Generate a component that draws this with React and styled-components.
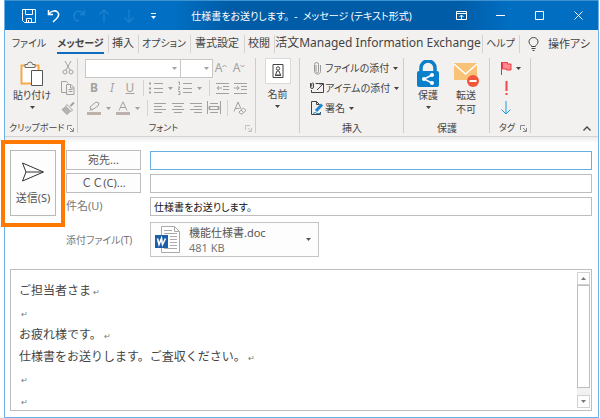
import { useState } from "react";
import styled, { createGlobalStyle, css } from "styled-components";

const TABS = [
  { name: "ファイル", width: 48, size: 10 },
  { name: "メッセージ", width: 55, size: 10, active: true },
  { name: "挿入", width: 30, size: 11, line: true },
  { name: "オプション", width: 52, size: 10, line: true },
  { name: "書式設定", width: 54, size: 11, line: true },
  { name: "校閲", width: 30, size: 11, line: true },
  {
    name: "活文Managed Information Exchange",
    width: 208,
    size: 12,
    line: true,
  },
  { name: "ヘルプ", width: 37, size: 10, line: true },
];

const BODY_LINES = [
  "ご担当者さま",
  "",
  "お疲れ様です。",
  "仕様書をお送りします。ご査収ください。",
  "",
  "",
];

const Icon = ({ w = 16, h = 16, children, ...rest }) => (
  <svg
    width={w}
    height={h}
    viewBox={`0 0 ${w} ${h}`}
    fill="none"
    stroke="currentColor"
    aria-hidden="true"
    {...rest}
  >
    {children}
  </svg>
);

const Caret = () => (
  <Icon w={5} h={3} stroke="none">
    <path d="M0 0h5L2.500 3z" fill="currentColor" />
  </Icon>
);

const Launcher = () => (
  <Icon w={7} h={7}>
    <path d="M.5 5V.5H5M3 3l3 3M6.500 3v3.500H3" />
  </Icon>
);

const Lines = ({ rows }) => (
  <Icon w={14} h={14}>
    {rows.map(([from, to], i) => (
      <path key={i} d={`M${from} ${2.5 + i * 3}H${to}`} />
    ))}
  </Icon>
);

const App = () => {
  const [subject, setSubject] = useState("仕様書をお送りします。");
  const [to, setTo] = useState("");
  const [cc, setCc] = useState("");

  return (
    <>
      <GlobalStyle />
      <Window>
        <TitleBar>
          <QuickAccess>
            <TitleButton aria-label="上書き保存">
              <Icon w={14} h={14}>
                <path d="M.5.5h13v13h-11l-2-2zM3.500.5v5h7v-5M4.500 13.500v-4h5v4M6.500 11v2" />
              </Icon>
            </TitleButton>
            <TitleButton aria-label="元に戻す">
              <Icon w={14} h={14} strokeWidth="1.500">
                <path d="M1.500 1v4.500H6M1.500 5.500C4 2 8 .8 10.500 3c3 3 0 6-4.500 10" />
              </Icon>
            </TitleButton>
            <TitleButton aria-label="やり直し" disabled>
              <Icon w={14} h={14} strokeWidth="1.500">
                <path d="M12.500 1v4.500H8M12 5C9 1.500 5 1.500 3 4c-2.500 3.500 0 8 4 8" />
              </Icon>
            </TitleButton>
            <TitleButton aria-label="前のアイテム" disabled>
              <Icon w={14} h={14} strokeWidth="1.300">
                <path d="M7 13.500V1M2.500 5.500L7 1l4.500 4.500" />
              </Icon>
            </TitleButton>
            <TitleButton aria-label="次のアイテム" disabled>
              <Icon w={14} h={14} strokeWidth="1.300">
                <path d="M7 .5V13M2.500 8.500L7 13l4.500-4.500" />
              </Icon>
            </TitleButton>
            <TitleButton aria-label="カスタマイズ">
              <Icon w={5} h={6}>
                <path d="M0 .5h5" />
                <path d="M0 3h5L2.500 6z" fill="currentColor" stroke="none" />
              </Icon>
            </TitleButton>
          </QuickAccess>
          <Title>仕様書をお送りします。&nbsp; -&nbsp; メッセージ (テキスト形式)</Title>
          <WindowControls>
            <TitleButton $wide aria-label="リボンの表示オプション">
              <Icon w={11} h={10}>
                <path d="M.5.5h10v8H.5zM.5 2.500h10M5.500 8V4M3.500 6l2-2 2 2" />
              </Icon>
            </TitleButton>
            <TitleButton $wide aria-label="最小化">
              <Icon w={9} h={9}>
                <path d="M0 4.500h9" />
              </Icon>
            </TitleButton>
            <TitleButton $wide aria-label="最大化">
              <Icon w={9} h={9}>
                <path d="M.5.5h8v8h-8z" />
              </Icon>
            </TitleButton>
            <TitleButton $wide aria-label="閉じる">
              <Icon w={9} h={9}>
                <path d="M.5.5l8 8M8.500.5l-8 8" />
              </Icon>
            </TitleButton>
          </WindowControls>
        </TitleBar>

        <Tabs>
          {TABS.map((tab) => (
            <Tab
              key={tab.name}
              $width={tab.width}
              $size={tab.size}
              $active={tab.active}
              $line={tab.line}
            >
              <span>{tab.name}</span>
            </Tab>
          ))}
          <Assist>
            <Icon w={11} h={14}>
              <path d="M3.500 9.500C3.500 8 1 7.500 1 4.800a4.500 4.300 0 019 0C10 7.500 7.500 8 7.500 9.500zM3.500 11.500h4M4.500 13.500h2" />
            </Icon>
            操作アシ
          </Assist>
        </Tabs>

        <Ribbon>
          <Group $width={73}>
            <GroupBody>
              <BigButton $width={54}>
                <IconSlot>
                  <Icon w={24} h={28}>
                    <path d="M1.500 5.500h17v18h-17z" fill="#fff" stroke="#f5a94a" strokeWidth="2" />
                    <path d="M5 7.500v-3h2.500a2.500 2.500 0 015 0H15v3z" fill="#f3f1f0" stroke="#6b6b6b" />
                    <path d="M11.500 10.500h11v15h-11z" fill="#fff" stroke="#555" />
                  </Icon>
                </IconSlot>
                貼り付け
                <Caret />
              </BigButton>
              <Stack>
                <ToolButton aria-label="切り取り">
                  <Icon w={12} h={14}>
                    <path d="M3 0l5 9M9 0L4 9" />
                    <circle cx="3" cy="11" r="2" />
                    <circle cx="9" cy="11" r="2" />
                  </Icon>
                </ToolButton>
                <ToolButton aria-label="コピー">
                  <Icon w={14} h={14}>
                    <path d="M5 11.500H.5v-11h5l2 2M5.500 3.500h4.500l3 3v7H5.500zM9.500 3.500v3.500H13M7.500 8.500h4M7.500 10.500h4" />
                  </Icon>
                </ToolButton>
                <ToolButton aria-label="書式のコピー">
                  <Icon w={14} h={13}>
                    <path d="M13 .5L9.500 4" strokeWidth="2" />
                    <path d="M6 2.500l5.500 5.500-1.500 1.500L4.500 4z" fill="#f3f1f0" />
                    <path d="M4.500 5L1 7.500 6 12.500 9 9.500z" fill="#b6b4b3" />
                  </Icon>
                </ToolButton>
              </Stack>
            </GroupBody>
            <GroupLabel $kana>
              クリップボード
              <Launcher />
            </GroupLabel>
          </Group>

          <Group $width={178}>
            <FontBody>
              <ToolRow>
                <Picker $width={96}>
                  <select aria-label="フォント" />
                  <Caret />
                </Picker>
                <Picker $width={33}>
                  <select aria-label="フォント サイズ" />
                  <Caret />
                </Picker>
                <ToolButton aria-label="拡大">
                  A
                  <Icon w={5} h={8}>
                    <path d="M.5 3l2-2 2 2" />
                  </Icon>
                </ToolButton>
                <ToolButton aria-label="縮小">
                  A
                  <Icon w={5} h={8}>
                    <path d="M.5 1l2 2 2-2" />
                  </Icon>
                </ToolButton>
              </ToolRow>
              <ToolRow>
                <ToolButton aria-label="太字">
                  <b>B</b>
                </ToolButton>
                <ToolButton aria-label="斜体">
                  <i>I</i>
                </ToolButton>
                <ToolButton aria-label="下線">
                  <u>U</u>
                </ToolButton>
                <ToolLine />
                <ToolButton aria-label="箇条書き">
                  <Icon w={14} h={14}>
                    <path d="M5 2.500h9M5 7.500h9M5 11.500h9" />
                    <path d="M0 2.500h2M0 7.500h2M0 11.500h2" strokeWidth="2" />
                  </Icon>
                </ToolButton>
                <DropButton aria-label="箇条書きの種類">
                  <Caret />
                </DropButton>
                <ToolButton aria-label="段落番号">
                  <Icon w={14} h={14}>
                    <path d="M5 2.500h9M5 7.500h9M5 11.500h9M0 1h1.500v3M0 6h2L0 8.500h2M0 10.500h2v3H0" />
                  </Icon>
                </ToolButton>
                <DropButton aria-label="番号の種類">
                  <Caret />
                </DropButton>
                <ToolLine />
                <ToolButton aria-label="インデントを減らす">
                  <Icon w={13} h={13}>
                    <path d="M0 1.500h13M7 4.500h6M7 7.500h6M0 11.500h13M6 6H.8M3 4L1 6l2 2" />
                  </Icon>
                </ToolButton>
                <ToolButton aria-label="インデントを増やす">
                  <Icon w={13} h={13}>
                    <path d="M0 1.500h13M7 4.500h6M7 7.500h6M0 11.500h13M0 6h5.500M3 4l2 2-2 2" />
                  </Icon>
                </ToolButton>
              </ToolRow>
              <ToolRow>
                <ToolButton aria-label="蛍光ペン">
                  <Icon w={14} h={14}>
                    <path d="M4 9L3 6l6-5 3 1-1 3-6 4zM3 9.500l2-2" />
                    <path d="M0 12.500h14" stroke="#bdb1ac" strokeWidth="3" />
                  </Icon>
                </ToolButton>
                <DropButton aria-label="蛍光ペンの色">
                  <Caret />
                </DropButton>
                <ToolButton aria-label="フォントの色">
                  <Icon w={14} h={14}>
                    <path d="M3 9.500L7 .8l4 8.700M4.500 6.500h5" />
                    <path d="M0 12.500h14" stroke="#bdb1ac" strokeWidth="3" />
                  </Icon>
                </ToolButton>
                <DropButton aria-label="色の選択">
                  <Caret />
                </DropButton>
                <ToolLine />
                <ToolButton aria-label="左揃え">
                  <Lines rows={[[1, 13], [1, 9], [1, 13], [1, 9]]} />
                </ToolButton>
                <ToolButton aria-label="中央揃え">
                  <Lines rows={[[1, 13], [3, 11], [1, 13], [3, 11]]} />
                </ToolButton>
                <ToolButton aria-label="右揃え">
                  <Lines rows={[[1, 13], [5, 13], [1, 13], [5, 13]]} />
                </ToolButton>
                <ToolButton aria-label="均等割り付け">
                  <Icon w={14} h={14}>
                    <path d="M.5 0v13M13.500 0v13M3 2.500h8M3 11.500h8M2 5.500h10v3H2zM4 5.500L2 7l2 1.500M10 5.500L12 7l-2 1.500" />
                  </Icon>
                </ToolButton>
                <ToolLine />
                <ToolButton aria-label="書式のクリア">
                  <Icon w={14} h={14}>
                    <path d="M1 10.500L5 1l3 7M2.500 7.500h4M6 11l4.500-4L13 9.500 9 13H7.500zM8 9l2.500 2.500" />
                  </Icon>
                </ToolButton>
              </ToolRow>
            </FontBody>
            <GroupLabel $kana $muted>
              <span>フォント</span>
              <Launcher />
            </GroupLabel>
          </Group>

          <Group $width={44}>
            <GroupBody>
              <BigButton $width={43}>
                <NameBox>
                  <Icon w={12} h={14}>
                    <path d="M1 .5h10v13H1zM3.500 11l1.500-4h2l1.500 4zM3 11.500h6" />
                    <circle cx="6" cy="4.500" r="1.700" />
                  </Icon>
                </NameBox>
                名前
                <Caret />
              </BigButton>
            </GroupBody>
          </Group>

          <Group $width={104}>
            <GroupBody>
              <Stack $start>
                <RowButton>
                  <Icon w={14} h={13}>
                    <path d="M6 3v6.500a1.200 1.200 0 002.500 0V2.500a2 2 0 00-4 0V9.500c0 3.500 6 3.500 6 0V3" stroke="#999" />
                  </Icon>
                  ファイルの添付
                  <Caret />
                </RowButton>
                <RowButton>
                  <Icon w={14} h={12}>
                    <path d="M5.500 1.500h8v9h-12V8M7 8l6-6M9.500 2h4v4" />
                    <path d="M.5 1v4a1.500 1.500 0 003 0V1.500a1 1 0 00-1.800 0v3" />
                  </Icon>
                  アイテムの添付
                  <Caret />
                </RowButton>
                <RowButton>
                  <Icon w={14} h={14}>
                    <path d="M9.500 3.500l-3-3H1.500v13h9V11M6.500.5v3h3" />
                    <path d="M12 3.500L6 10" stroke="#1e88d0" strokeWidth="3" />
                    <path d="M3 12.500l2-1 2 1h4" stroke="#1e88d0" />
                  </Icon>
                  署名
                  <Caret />
                </RowButton>
              </Stack>
            </GroupBody>
            <GroupLabel>
              <span>挿入</span>
            </GroupLabel>
          </Group>

          <Group $width={86}>
            <GroupBody>
              <BigButton $width={48}>
                <IconSlot>
                  <Icon w={24} h={28} stroke="none">
                    <path d="M5 12V8a7 7 0 0114 0v4" stroke="#0a7fca" strokeWidth="3.500" />
                    <rect x="1" y="11" width="22" height="16" rx="2" fill="#0a7fca" />
                    <path d="M17 14.500L8 19l9 4.500" stroke="#fff" strokeWidth="1.500" />
                    <circle cx="16" cy="15" r="2" fill="#fff" />
                    <circle cx="8" cy="19" r="2" fill="#fff" />
                    <circle cx="16" cy="23" r="2" fill="#fff" />
                  </Icon>
                </IconSlot>
                保護
                <Caret />
              </BigButton>
              <BigButton $width={28}>
                <IconSlot>
                  <Icon w={26} h={28} stroke="none">
                    <path d="M1 3h23v17H1z" fill="#f8c377" />
                    <path d="M1 4l11.500 10L24 4" stroke="#fff" strokeWidth="1.500" />
                    <circle cx="20" cy="21" r="6" fill="#f0573c" />
                    <path d="M16.500 21h7" stroke="#fff" strokeWidth="2" />
                  </Icon>
                </IconSlot>
                転送
                <br />
                不可
              </BigButton>
            </GroupBody>
            <GroupLabel>
              <span>保護</span>
            </GroupLabel>
          </Group>

          <Group $width={41}>
            <GroupBody>
              <Stack $start>
                <FlagButton aria-label="フラグの設定">
                  <Icon w={12} h={14}>
                    <path d="M1.500 1v13" stroke="#666" />
                    <path d="M2.500 1.500h5v1.500h3.500v6H6.500V8h-4z" fill="#ff8a8f" stroke="#ee3a43" />
                  </Icon>
                  <Caret />
                </FlagButton>
                <FlagButton aria-label="重要度 - 高">
                  <Icon w={12} h={14}>
                    <path d="M6.500 0v10M6.500 12v2" stroke="#f4454c" strokeWidth="2" />
                  </Icon>
                </FlagButton>
                <FlagButton aria-label="重要度 - 低">
                  <Icon w={12} h={14}>
                    <path d="M6 0v13M1.500 8.500L6 13l4.500-4.500" stroke="#1d9ade" />
                  </Icon>
                </FlagButton>
              </Stack>
            </GroupBody>
            <GroupLabel $kana>
              <span>タグ</span>
              <Launcher />
            </GroupLabel>
          </Group>
          <CollapseButton aria-label="リボンを折りたたむ">
            <Icon w={8} h={5}>
              <path d="M.5 4.500L4 1l3.500 3.500" strokeWidth="1.300" />
            </Icon>
          </CollapseButton>
        </Ribbon>

        <Compose>
          <Header>
            <SendCell>
              <SendButton>
                <Icon w={24} h={20} stroke="#333">
                  <path d="M1.500 1L22.500 10 1.500 19 5 10zM5 10h17" />
                </Icon>
                送信(S)
              </SendButton>
              <SendFrame />
            </SendCell>
            <Fields>
              <FieldRow>
                <FieldButton>宛先...</FieldButton>
                <FieldInput
                  $focus
                  aria-label="宛先"
                  value={to}
                  onChange={(e) => setTo(e.target.value)}
                />
              </FieldRow>
              <FieldRow>
                <FieldButton>ＣＣ(C)...</FieldButton>
                <FieldInput
                  aria-label="CC"
                  value={cc}
                  onChange={(e) => setCc(e.target.value)}
                />
              </FieldRow>
              <FieldRow>
                <FieldLabel htmlFor="subject">件名(U)</FieldLabel>
                <FieldInput
                  id="subject"
                  value={subject}
                  onChange={(e) => setSubject(e.target.value)}
                />
              </FieldRow>
              <AttachmentRow>
                <FieldLabel htmlFor="attachment" $kana>
                  添付ファイル(T)
                </FieldLabel>
                <Attachment id="attachment">
                  <Icon w={26} h={27}>
                    <path d="M6.500.5h13l5 5v21h-18z" fill="#fff" stroke="#aaa" />
                    <path d="M19.500.5v5h5" stroke="#aaa" />
                    <path d="M9 4.500h8M9 7.500h13M15 10.500h7M15 13.500h7M15 16.500h7M15 19.500h7M9 22.500h13" stroke="#aaa" />
                    <path d="M0 9h13v13H0z" fill="#1b5fa8" stroke="none" />
                    <path d="M2.500 12.500l1.500 6 2.500-6 1 6 3-6" stroke="#fff" strokeWidth="1.600" />
                  </Icon>
                  <FileInfo>
                    <span>機能仕様書.doc</span>
                    <small>481 KB</small>
                  </FileInfo>
                  <Caret />
                </Attachment>
              </AttachmentRow>
            </Fields>
          </Header>

          <Editor>
            <Message
              role="textbox"
              aria-multiline="true"
              aria-label="本文"
              contentEditable
              suppressContentEditableWarning
            >
              {BODY_LINES.map((line, idx) => (
                <p key={idx}>
                  {line}
                  <Return>↵</Return>
                </p>
              ))}
            </Message>
            <ScrollBar>
              <ScrollButton aria-label="上へ">
                <Icon w={5} h={3} stroke="none">
                  <path d="M0 3h5L2.500 0z" fill="currentColor" />
                </Icon>
              </ScrollButton>
              <ScrollThumb />
              <ScrollButton aria-label="下へ">
                <Caret />
              </ScrollButton>
            </ScrollBar>
          </Editor>
        </Compose>
      </Window>
    </>
  );
};

export default App;

const GlobalStyle = createGlobalStyle`
  * {
    box-sizing: border-box;
  }

  body {
    margin: 0;
    background: #fff;
    color: #444;
    font: 11px/14px "Noto Sans", "Noto Sans CJK JP", sans-serif;
    font-feature-settings: "palt";
  }

  button,
  input,
  select {
    margin: 0;
    padding: 0;
    border: 0;
    background: none;
    color: inherit;
    font: inherit;
    font-feature-settings: inherit;
  }

  svg {
    display: block;
    flex: none;
  }

  p {
    margin: 0;
  }
`;

const Window = styled.main`
  display: flex;
  flex-direction: column;
  height: 100vh;
  margin: 0 1px 0 4px;
  border: solid #6bb0e6;
  border-width: 0 1px 1px;
`;

const TitleBar = styled.header`
  display: grid;
  grid-template-columns: 1fr auto 1fr;
  align-items: center;
  flex: none;
  height: 30px;
  border-top: 1px solid #3d93d2;
  background: linear-gradient(
    90deg,
    #0170c4 28%,
    #005ca6 38%,
    #005ca6 76%,
    #016ec2 85%
  );
  color: #fff;
`;

const QuickAccess = styled.div`
  display: flex;
  padding-left: 11px;
`;

const WindowControls = styled.div`
  display: flex;
  justify-content: flex-end;
`;

const TitleButton = styled.button`
  display: flex;
  align-items: center;
  justify-content: center;
  width: ${({ $wide }) => ($wide ? 39 : 25)}px;
  height: 28px;

  &:disabled {
    color: #1c80cf;
  }
`;

const Title = styled.h1`
  margin: 0;
  font-size: 10px;
  font-weight: 400;
  white-space: nowrap;
`;

const Tabs = styled.nav`
  display: flex;
  flex: none;
  height: 28px;
  background: #f3f1f0;
  overflow: hidden;
`;

const Tab = styled.button`
  flex: none;
  width: ${({ $width }) => $width}px;
  padding: 4px 0;
  font-size: ${({ $size }) => $size}px;
  white-space: nowrap;

  span {
    display: block;
    height: 20px;
    line-height: 18px;
  }

  ${({ $line }) =>
    $line &&
    css`
      background: linear-gradient(#d5d3d2, #d5d3d2) left center / 1px 18px
        no-repeat;
    `}

  ${({ $active }) =>
    $active &&
    css`
      padding: 4px;
      font-weight: 700;

      span {
        border-bottom: 2px solid #0f6cbd;
      }
    `}
`;

const Assist = styled.button`
  display: flex;
  align-items: center;
  gap: 9px;
  flex: 1;
  padding-left: 9px;
  white-space: nowrap;
  background: linear-gradient(#d5d3d2, #d5d3d2) left center / 1px 18px no-repeat;
`;

const Ribbon = styled.section`
  display: flex;
  flex: none;
  height: 79px;
  background: #f3f1f0;
  border-bottom: 1px solid #d6d2d2;
  font-size: 10px;
`;

const Group = styled.div`
  display: flex;
  flex-direction: column;
  flex: none;
  width: ${({ $width }) => $width}px;
  background: linear-gradient(#cfcdcc, #cfcdcc) right top / 1px 75px no-repeat;
`;

const GroupBody = styled.div`
  display: flex;
  height: 62px;
`;

const FontBody = styled.div`
  padding: 0 0 0 7px;
  height: 62px;
`;

const GroupLabel = styled.div`
  display: flex;
  align-items: center;
  justify-content: space-between;
  height: 16px;
  padding: 0 4px;
  font-size: ${({ $kana }) => ($kana ? 9 : 10)}px;
  white-space: nowrap;

  span {
    flex: 1;
    text-align: center;
  }

  svg {
    color: ${({ $muted }) => ($muted ? "#c4c2c1" : "#888")};
  }
`;

const BigButton = styled.button`
  display: flex;
  flex-direction: column;
  align-items: center;
  flex: none;
  width: ${({ $width }) => $width}px;
  line-height: 14px;
  white-space: nowrap;

  > svg {
    margin-top: 4px;
  }
`;

const IconSlot = styled.span`
  display: block;
  height: 30px;
  padding-top: 2px;
`;

const NameBox = styled.span`
  display: flex;
  align-items: center;
  justify-content: center;
  width: 26px;
  height: 26px;
  margin-bottom: 3px;
  border: 1px solid #dcdad9;
  background: #fff;
`;

const Stack = styled.div`
  display: flex;
  flex-direction: column;
  padding-left: ${({ $start }) => ($start ? 10 : 0)}px;
  color: ${({ $start }) => ($start ? "inherit" : "#a3a1a0")};
`;

const ToolRow = styled.div`
  display: flex;
  align-items: center;
  height: 20px;
  color: #a3a1a0;
`;

const ToolButton = styled.button`
  display: flex;
  align-items: center;
  justify-content: center;
  flex: none;
  width: 18px;
  height: 20px;
  font-size: 12px;
`;

const DropButton = styled(ToolButton)`
  width: 11px;
`;

const ToolLine = styled.span`
  width: 8px;
  height: 16px;
  background: linear-gradient(#d5d3d2, #d5d3d2) center / 1px 100% no-repeat;
`;

const Picker = styled.span`
  display: flex;
  align-items: center;
  width: ${({ $width }) => $width}px;
  height: 19px;
  margin-right: -1px;
  padding-right: 3px;
  border: 1px solid #c9c7c6;
  background: #fff;

  select {
    flex: 1;
    min-width: 0;
    height: 100%;
    appearance: none;
  }
`;

const RowButton = styled.button`
  display: flex;
  align-items: center;
  gap: 1px;
  height: 20px;
  white-space: nowrap;

  svg:last-child {
    margin-left: 3px;
  }
`;

const FlagButton = styled.button`
  display: flex;
  align-items: center;
  gap: 4px;
  height: 20px;
`;

const CollapseButton = styled.button`
  align-self: flex-end;
  margin-left: auto;
  padding: 5px 7px;
`;

const Compose = styled.section`
  display: flex;
  flex-direction: column;
  flex: 1;
  gap: 12px;
  min-height: 0;
  padding: 13px 6px 6px 5px;
  background: linear-gradient(#ececec, #fff 6px);
`;

const Header = styled.div`
  display: flex;
  gap: 10px;
  color: #555;
`;

const SendCell = styled.div`
  position: relative;
  flex: none;
  width: 46px;
`;

const SendButton = styled.button`
  display: flex;
  flex-direction: column;
  align-items: center;
  justify-content: center;
  gap: 9px;
  width: 100%;
  height: 66px;
  border: 1px solid #b9b9b9;
  background: #fdfdfd;
`;

const SendFrame = styled.div`
  position: absolute;
  inset: -10px -9px auto;
  height: 87px;
  border: 4px solid #ff7800;
  pointer-events: none;
`;

const Fields = styled.div`
  display: flex;
  flex-direction: column;
  flex: 1;
  gap: 3px;
`;

const FieldRow = styled.div`
  display: grid;
  grid-template-columns: 75px 1fr;
  gap: 9px;
  align-items: center;
  height: 20px;
`;

const AttachmentRow = styled(FieldRow)`
  height: 35px;
  margin-top: 3px;
`;

const FieldButton = styled.button`
  height: 20px;
  border: 1px solid #bdbdbd;
  background: #fdfdfd;
  font-feature-settings: normal;
`;

const FieldInput = styled.input`
  width: 100%;
  min-width: 0;
  height: 19px;
  padding: 0 3px;
  border: 1px solid ${({ $focus }) => ($focus ? "#6aade0" : "#bdbdbd")};
  background: #fff;
  color: #111;
  font-size: 10px;
`;

const FieldLabel = styled.label`
  color: #777;
  font-size: ${({ $kana }) => ($kana ? 10 : 11)}px;
  white-space: nowrap;
`;

const Attachment = styled.button`
  display: flex;
  align-items: center;
  gap: 8px;
  width: 169px;
  height: 35px;
  padding: 0 7px 0 4px;
  border: 1px solid #c4c4c4;
  background: #fdfdfd;
  text-align: left;
`;

const FileInfo = styled.span`
  display: flex;
  flex-direction: column;
  flex: 1;
  line-height: 15px;
  white-space: nowrap;

  small {
    color: #777;
    font-size: 11px;
  }
`;

const Editor = styled.div`
  display: flex;
  flex: 1;
  min-height: 0;
  padding: 2px 1px;
  border: 1px solid #bdbdbd;
  background: #fff;
`;

const Message = styled.div`
  flex: 1;
  padding: 7px 7px 0;
  color: #444;
  font: 12px/22px "Noto Sans CJK JP", sans-serif;
  font-feature-settings: normal;
  outline: none;
  overflow: hidden;

  p {
    height: 22px;
  }
`;

const Return = styled.span`
  margin-left: 2px;
  color: #777;
  font-size: 8px;
  line-height: 1;
`;

const ScrollBar = styled.div`
  display: flex;
  flex-direction: column;
  width: 13px;
  background: #f2f2f2;
`;

const ScrollButton = styled.button`
  display: flex;
  align-items: center;
  justify-content: center;
  flex: none;
  height: 13px;
  border: 1px solid #d2d2d2;
  background: #fff;
  color: #777;
`;

const ScrollThumb = styled.div`
  flex: 1;
  margin-bottom: 7px;
  border: 1px solid #bdbdbd;
  background: #fff;
`;
